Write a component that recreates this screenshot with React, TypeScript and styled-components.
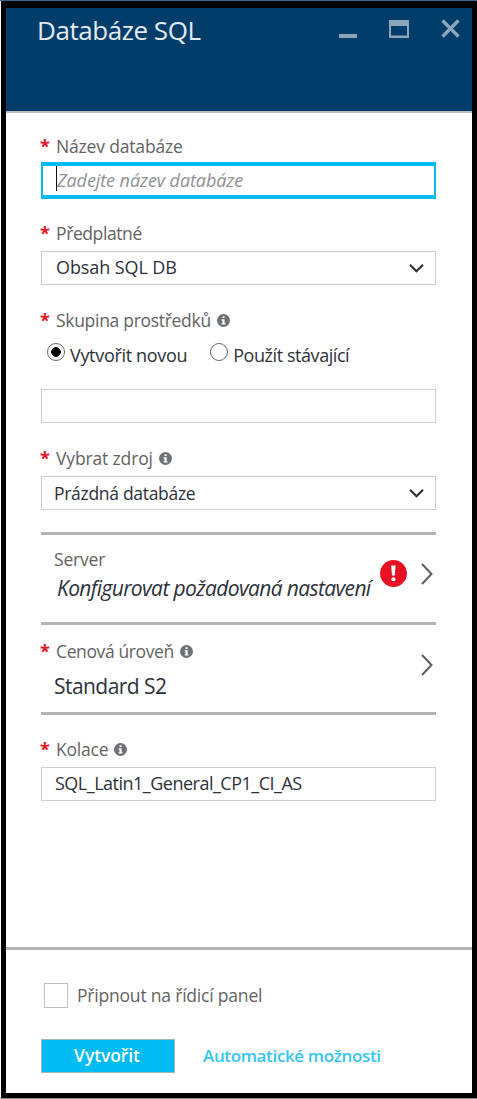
import React from "react";
import styled, { createGlobalStyle } from "styled-components";

const Global = createGlobalStyle`
  *, *::before, *::after { box-sizing: border-box; }
  body { margin: 0; background: #fff; font-family: "Open Sans", "Noto Sans", sans-serif; }
`;

const Frame = styled.div`
  width: 477px;
  height: 1099px;
  padding-left: 1px;
  border-top: 1px solid #3d668b;
  border-bottom: 1px solid #8a8a8a;
`;

const Blade = styled.main`
  height: 100%;
  display: flex;
  flex-direction: column;
  border: 5px solid #000;
  border-top-width: 7px;
  background: #fff;
`;

const Header = styled.header`
  height: 105px;
  flex: none;
  display: flex;
  justify-content: space-between;
  align-items: flex-start;
  padding: 4px 12px 0 31px;
  background: #003d6b;
  border-bottom: 2px solid #bcbcbc;
`;

const WindowButtons = styled.div`
  display: flex;
  gap: 31px;
  padding-top: 7px;
`;

const Text = styled.span<{ $size?: number; $spacing?: number; $color?: string; $weight?: number; $italic?: boolean }>`
  font-size: ${(p) => p.$size ?? 18}px;
  letter-spacing: ${(p) => p.$spacing ?? 0}px;
  color: ${(p) => p.$color ?? "#2d313a"};
  font-weight: ${(p) => p.$weight ?? 400};
  font-style: ${(p) => (p.$italic ? "italic" : "normal")};
  line-height: 1.4;
  white-space: nowrap;
`;

const LabelText = styled(Text)`
  font-size: 17.5px;
  color: #636363;
`;

const Body = styled.div`
  flex: 1;
  padding: 0 36px 0 35px;
`;

const Label = styled.div<{ $top: number; $gap?: number }>`
  display: flex;
  align-items: center;
  height: 24px;
  margin-top: ${(p) => p.$top}px;
  margin-bottom: ${(p) => p.$gap ?? 5}px;

  ${LabelText} {
    padding-bottom: 2px;
  }
`;

const Star = styled.span`
  width: 16px;
  height: 24px;
  flex: none;
  margin-left: -1px;
  color: #e81123;
  font-size: 18px;
  font-weight: 700;
  line-height: 23px;
`;

const InfoSvg = styled.svg`
  margin: 0 0 2px 6px;
  flex: none;
`;

const Box = styled.div<{ $focus?: boolean; $pad?: number }>`
  display: flex;
  align-items: center;
  justify-content: space-between;
  height: ${(p) => (p.$focus ? 37 : 34)}px;
  padding: 0 11px 0 ${(p) => p.$pad ?? 13}px;
  border: 1px solid #cfcfcf;
  ${(p) => p.$focus && "border: solid #00bcf2; border-width: 4px 2px;"}
`;

const Caret = styled.i`
  align-self: flex-start;
  width: 1px;
  height: 25px;
  background: #111;
`;

const Field = styled.div`
  display: flex;
  align-items: center;
  height: 29px;
`;

const Radios = styled.div`
  display: flex;
  align-items: flex-start;
  gap: 23px;
  height: 31px;
  margin: 7px 0 18px 6px;
`;

const RadioOption = styled.label`
  display: flex;
  align-items: flex-start;
  gap: 5px;

  ${Text} {
    padding-top: 3px;
  }
`;

const Radio = styled.span<{ $on?: boolean }>`
  width: 18px;
  height: 18px;
  flex: none;
  margin-top: 3px;
  border: 1px solid #666;
  border-radius: 50%;
  background: ${(p) => (p.$on ? "radial-gradient(circle, #000 4.5px, #fff 5.2px)" : "#fff")};
`;

const Pickers = styled.div`
  margin-top: 22px;
  border-bottom: 3px solid #b4b4b4;
`;

const Picker = styled.section`
  display: flex;
  align-items: flex-start;
  justify-content: space-between;
  height: 90px;
  border-top: 3px solid #b4b4b4;
`;

const ServerText = styled.div`
  display: flex;
  flex-direction: column;
  gap: 2px;
  padding: 12px 0 0 13px;

  ${LabelText} + ${Text} {
    margin-left: 3px;
  }
`;

const TierText = styled.div`
  display: flex;
  flex-direction: column;

  > ${Text} {
    margin: 3px 0 0 13px;
  }
`;

const Icons = styled.div<{ $top: number }>`
  display: flex;
  align-items: center;
  gap: 14px;
  padding: ${(p) => p.$top}px 3px 0 0;
`;

const Footer = styled.footer`
  height: 146px;
  flex: none;
  padding: 33px 35px 0;
  border-top: 3px solid #b4b4b4;
`;

const CheckRow = styled.label`
  display: flex;
  align-items: center;
  gap: 9px;
  height: 25px;
  padding-left: 3px;
`;

const Checkbox = styled.span`
  width: 24px;
  height: 25px;
  border: 1px solid #bdbdbd;
`;

const Actions = styled.div`
  display: flex;
  align-items: center;
  gap: 28px;
  margin-top: 31px;
`;

const Create = styled.button`
  width: 134px;
  height: 34px;
  padding: 0 2px 1px 0;
  border: 1px solid #9db9c2;
  background: #00bcf2;
  font-family: inherit;
`;

const Info = () => (
  <InfoSvg width="13" height="13" viewBox="0 0 13 13">
    <circle cx="6.5" cy="6.5" r="6.5" fill="#6e7176" />
    <path d="M5.5 2.3h2.1v1.8H5.5zM4.6 5.2h3v4.1h.9v1.3H4.6V9.3h.9V6.5h-.9z" fill="#fff" />
  </InfoSvg>
);

const Down = () => (
  <svg width="15" height="10" viewBox="0 0 15 10" fill="none">
    <path d="M1 1.8 7.5 8.2 14 1.8" stroke="#2d313a" strokeWidth="2.2" />
  </svg>
);

const Right = () => (
  <svg width="12" height="22" viewBox="0 0 12 22" fill="none">
    <path d="M1 1 10.5 11 1 21" stroke="#5c6066" strokeWidth="2" />
  </svg>
);

const Alert = () => (
  <svg width="27" height="27" viewBox="0 0 27 27">
    <circle cx="13.5" cy="13.5" r="13.4" fill="#e81123" />
    <path d="M11.2 5.6h4.4l-.8 10H12z" fill="#fff" />
    <circle cx="13.4" cy="19.2" r="2" fill="#fff" />
  </svg>
);

const Minimize = () => (
  <svg width="19" height="20" viewBox="0 0 19 20">
    <path d="M0 15h18v4H0z" fill="#8ba5bb" />
  </svg>
);

const Maximize = () => (
  <svg width="21" height="20" viewBox="0 0 21 20">
    <path d="M0 1h20v18H0zM2 7v9.5h16V7z" fillRule="evenodd" fill="#8ba5bb" />
  </svg>
);

const Close = () => (
  <svg width="19" height="20" viewBox="0 0 19 20">
    <path d="M1.5 1.5l16 16M17.5 1.5l-16 16" stroke="#8ba5bb" strokeWidth="3.4" />
  </svg>
);

export default function App() {
  return (
    <>
      <Global />
      <Frame>
        <Blade>
          <Header>
            <Text $size={26} $spacing={-0.45} $color="#e3eaf0">Databáze SQL</Text>
            <WindowButtons>
              <Minimize />
              <Maximize />
              <Close />
            </WindowButtons>
          </Header>
          <Body>
            <Label $top={22} $gap={3}>
              <Star>*</Star>
              <LabelText $spacing={-0.17}>Název databáze</LabelText>
            </Label>
            <Box $focus>
              <Field>
                <Caret />
                <Text $spacing={-0.08} $color="#8f9194" $italic>Zadejte název databáze</Text>
              </Field>
            </Box>
            <Label $top={23}>
              <Star>*</Star>
              <LabelText $spacing={-0.4}>Předplatné</LabelText>
            </Label>
            <Box $pad={14}>
              <Text $spacing={-0.1}>Obsah SQL DB</Text>
              <Down />
            </Box>
            <Label $top={24} $gap={0}>
              <Star>*</Star>
              <LabelText $spacing={-0.3}>Skupina prostředků</LabelText>
              <Info />
            </Label>
            <Radios>
              <RadioOption>
                <Radio $on />
                <Text $spacing={-0.32}>Vytvořit novou</Text>
              </RadioOption>
              <RadioOption>
                <Radio />
                <Text $spacing={-0.44}>Použít stávající</Text>
              </RadioOption>
            </Radios>
            <Box />
            <Label $top={24}>
              <Star>*</Star>
              <LabelText $spacing={-0.15}>Vybrat zdroj</LabelText>
              <Info />
            </Label>
            <Box $pad={12}>
              <Text $size={17.5} $spacing={-0.3}>Prázdná databáze</Text>
              <Down />
            </Box>
            <Pickers>
              <Picker>
                <ServerText>
                  <LabelText $spacing={-0.2}>Server</LabelText>
                  <Text $size={21} $spacing={-0.62} $italic>Konfigurovat požadovaná nastavení</Text>
                </ServerText>
                <Icons $top={25}>
                  <Alert />
                  <Right />
                </Icons>
              </Picker>
              <Picker>
                <TierText>
                  <Label $top={15}>
                    <Star>*</Star>
                    <LabelText $spacing={-0.38}>Cenová úroveň</LabelText>
                    <Info />
                  </Label>
                  <Text $size={21} $spacing={-0.55}>Standard S2</Text>
                </TierText>
                <Icons $top={29}>
                  <Right />
                </Icons>
              </Picker>
            </Pickers>
            <Label $top={23}>
              <Star>*</Star>
              <LabelText $spacing={-0.2}>Kolace</LabelText>
              <Info />
            </Label>
            <Box>
              <Text $spacing={-0.5}>SQL_Latin1_General_CP1_CI_AS</Text>
            </Box>
          </Body>
          <Footer>
            <CheckRow>
              <Checkbox />
              <LabelText $spacing={-0.2}>Připnout na řídicí panel</LabelText>
            </CheckRow>
            <Actions>
              <Create>
                <Text $size={17.5} $spacing={-0.1} $color="#fff" $weight={600}>Vytvořit</Text>
              </Create>
              <Text $size={17} $spacing={-0.35} $color="#34c6f4" $weight={600}>Automatické možnosti</Text>
            </Actions>
          </Footer>
        </Blade>
      </Frame>
    </>
  );
}
